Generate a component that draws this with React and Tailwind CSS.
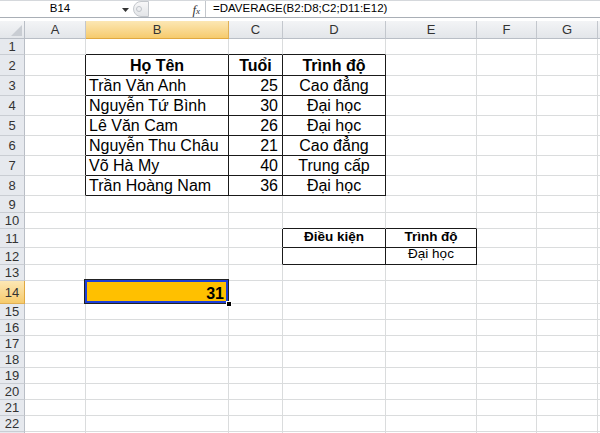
import React from "react";

const COLS = ["A", "B", "C", "D", "E", "F", "G", ""];
const ROW_COUNT = 23;

const data = {
  B2: { t: "Họ Tên", b: true, a: "center" },
  C2: { t: "Tuổi", b: true, a: "center" },
  D2: { t: "Trình độ", b: true, a: "center" },
  B3: { t: "Trần Văn Anh" }, C3: { t: "25", a: "right" }, D3: { t: "Cao đẳng", a: "center" },
  B4: { t: "Nguyễn Tứ Bình" }, C4: { t: "30", a: "right" }, D4: { t: "Đại học", a: "center" },
  B5: { t: "Lê Văn Cam" }, C5: { t: "26", a: "right" }, D5: { t: "Đại học", a: "center" },
  B6: { t: "Nguyễn Thu Châu" }, C6: { t: "21", a: "right" }, D6: { t: "Cao đẳng", a: "center" },
  B7: { t: "Võ Hà My" }, C7: { t: "40", a: "right" }, D7: { t: "Trung cấp", a: "center" },
  B8: { t: "Trần Hoàng Nam" }, C8: { t: "36", a: "right" }, D8: { t: "Đại học", a: "center" },
  D11: { t: "Điều kiện", b: true, a: "center", s: "sm" },
  E11: { t: "Trình độ", b: true, a: "center", s: "sm" },
  E12: { t: "Đại học", a: "center", s: "sm" },
  B14: { t: "31", b: true, a: "right" },
};

// col index: A=0 ... G=6, 7 = rest
function rightBlack(r, c) {
  if (r >= 2 && r <= 8 && c >= 0 && c <= 3) return true;
  if (r >= 11 && r <= 12 && c >= 2 && c <= 4) return true;
  return false;
}
function bottomBlack(r, c) {
  if (r >= 1 && r <= 8 && c >= 1 && c <= 3) return true;
  if (r >= 10 && r <= 12 && c >= 3 && c <= 4) return true;
  return false;
}

function Cell({ r, c }) {
  const key = COLS[c] + r;
  const d = data[key];
  const rb = rightBlack(r, c) ? "border-r-[#1a1a1a]" : "border-r-[#dadcdd]";
  const bb = bottomBlack(r, c) ? "border-b-[#1a1a1a]" : "border-b-[#dadcdd]";
  const isSel = key === "B14";
  const align =
    d && d.a === "center" ? "justify-center" : d && d.a === "right" ? "justify-end pr-[4px]" : "justify-start pl-[3px]";
  const size = d && d.s === "sm" ? "text-[13.5px] pb-[1px]" : "text-[16px] pb-[0px]";
  return (
    <div
      className={`relative flex items-end overflow-visible whitespace-nowrap border-r border-b ${rb} ${bb} ${align} ${size} ${
        isSel ? "bg-[#ffc000]" : "bg-white"
      } ${d && d.b ? "font-bold" : ""} text-black leading-[18px]`}
    >
      {d ? <span className="relative z-10">{d.t}</span> : null}
      {isSel ? (
        <>
          <div className="pointer-events-none absolute -left-[2px] -top-[2px] -right-[1px] -bottom-[1px] z-20 border border-[#222]">
            <div className="h-full w-full border-2 border-[#1d3fd8]" />
          </div>
          <div className="absolute -right-[4px] -bottom-[4px] z-30 h-[6px] w-[6px] border border-white bg-black" />
        </>
      ) : null}
    </div>
  );
}

function ColHeader({ label, sel }) {
  return (
    <div
      className={`flex items-center justify-center border-r border-b text-[13px] ${
        sel
          ? "bg-gradient-to-b from-[#fce7b4] to-[#f6cb6c] border-r-[#e0b055] border-b-[#e0a840] text-[#333]"
          : "bg-gradient-to-b from-[#f3f4f6] to-[#e3e6ea] border-r-[#c3c7cd] border-b-[#b9bec6] text-[#333]"
      }`}
    >
      {label}
    </div>
  );
}

function RowHeader({ n, sel, hide }) {
  return (
    <div
      className={`flex items-center justify-center border-r border-b text-[13px] leading-none ${
        sel
          ? "bg-gradient-to-b from-[#fce7b4] to-[#f6cb6c] border-r-[#e0a840] border-b-[#e0b055] text-[#333]"
          : "bg-[#e6e9ee] border-r-[#b9bec6] border-b-[#c9cdd3] text-[#333]"
      }`}
    >
      {hide ? null : n}
    </div>
  );
}

export default function App() {
  const rows = [];
  for (let r = 1; r <= ROW_COUNT; r++) {
    rows.push(<RowHeader key={"h" + r} n={r} sel={r === 14} hide={r === ROW_COUNT} />);
    for (let c = 0; c < 8; c++) {
      rows.push(<Cell key={r + "-" + c} r={r} c={c} />);
    }
  }
  return (
    <div className="h-[433px] w-[600px] overflow-hidden bg-white font-['Liberation_Sans',Arial,sans-serif]">
      {/* formula bar */}
      <div className="flex h-[18px] items-center border-t border-b border-t-[#d5d8dc] border-b-[#a9afb6] bg-white">
        <div className="relative flex h-full w-[133px] items-center">
          <span className="w-[120px] text-center text-[11.5px] text-black">B14</span>
          <svg width="7" height="4" viewBox="0 0 7 4" className="absolute left-[122px] top-[7px]">
            <polygon points="0,0 7,0 3.5,4" fill="#333" />
          </svg>
        </div>
        <div className="flex h-full w-[72px] items-center">
          <div className="flex h-[16px] w-[16px] items-center justify-start rounded-l-full border border-[#c3c7cc] bg-gradient-to-b from-[#f7f7f8] to-[#e3e5e8] pl-[2px]">
            <div className="h-[6px] w-[6px] rounded-full border border-[#c0c4ca]" />
          </div>
          <div className="flex-1" />
          <span className="mr-[5px] font-['Liberation_Serif',serif] text-[13px] italic leading-none text-[#333]">
            f<span className="text-[9px]">x</span>
          </span>
        </div>
        <div className="flex h-full flex-1 items-center border-l border-l-[#c3c7cc] pl-[7px] text-[11.5px] text-black">
          =DAVERAGE(B2:D8;C2;D11:E12)
        </div>
      </div>
      <div className="h-[3px] bg-white" />
      {/* sheet */}
      <div className="grid grid-cols-[25px_61px_143px_54px_103px_91px_60px_61px_1fr] grid-rows-[18px_16px_21px_20px_20px_20px_20px_20px_20px_17px_16px_19px_17px_16px_23px_16px_16px_16px_16px_16px_16px_16px_16px_16px]">
        <div className="relative border-r border-b border-r-[#b9bec6] border-b-[#b9bec6] bg-gradient-to-b from-[#f3f4f6] to-[#e3e6ea]">
          <svg width="11" height="11" viewBox="0 0 11 11" className="absolute bottom-[2px] right-[2px]">
            <polygon points="11,0 11,11 0,11" fill="#c9cdd3" />
          </svg>
        </div>
        {COLS.map((l, i) => (
          <ColHeader key={"c" + i} label={l} sel={l === "B"} />
        ))}
        {rows}
      </div>
    </div>
  );
}
